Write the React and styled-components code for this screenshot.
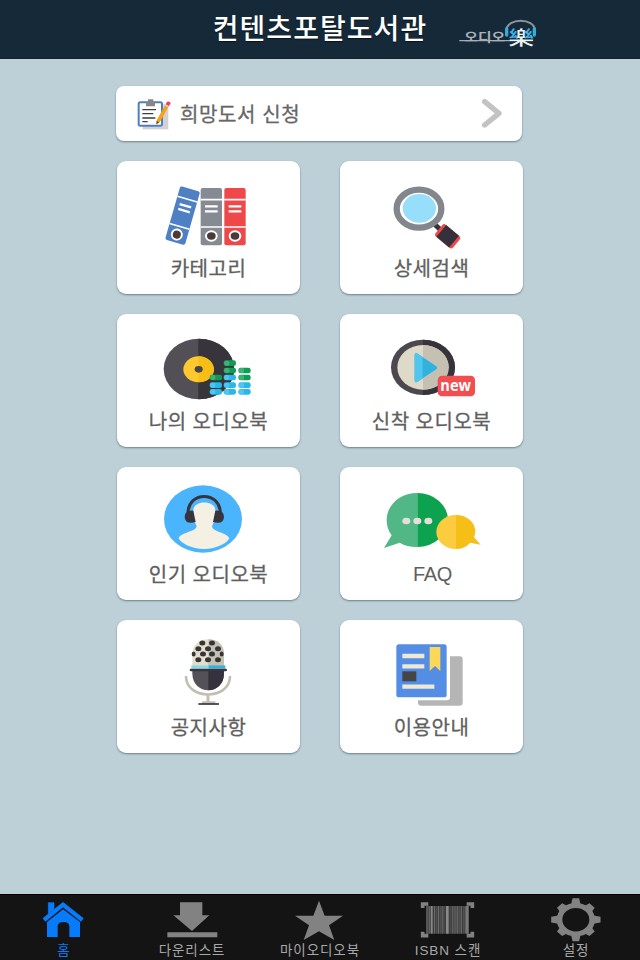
import React, { useState } from "react";
import styled, { createGlobalStyle } from "styled-components";

const menuItems = [
    { id: "category", label: "카테고리", viewBox: "20 17 549 285", Icon: BindersIcon },
    { id: "search", label: "상세검색", viewBox: "16 17 549 285", Icon: SearchIcon },
    { id: "my", label: "나의 오디오북", viewBox: "20 17 549 285", Icon: RecordIcon },
    { id: "new", label: "신착 오디오북", viewBox: "16 17 549 285", Icon: NewIcon },
    { id: "popular", label: "인기 오디오북", viewBox: "20 21 549 285", Icon: ListenerIcon },
    { id: "faq", label: "FAQ", viewBox: "16 21 549 285", Icon: ChatIcon },
    { id: "notice", label: "공지사항", viewBox: "20 17 549 285", Icon: MicIcon },
    { id: "guide", label: "이용안내", viewBox: "16 17 549 285", Icon: GuideIcon },
];

const tabItems = [
    { id: "home", label: "홈", viewBox: "0 27 384 144", Icon: HomeIcon },
    { id: "downloads", label: "다운리스트", viewBox: "384 27 384 144", Icon: DownloadIcon },
    { id: "mybooks", label: "마이오디오북", viewBox: "768 27 384 144", Icon: StarIcon },
    { id: "isbn", label: "ISBN 스캔", viewBox: "192 27 384 144", Icon: BarcodeIcon },
    { id: "settings", label: "설정", viewBox: "576 27 384 144", Icon: GearIcon },
];

function BindersIcon() {
    return (
        <>
            <g transform="translate(210 92) rotate(16)">
                <rect width="62" height="167" rx="6" fill="#4f80c4" />
                <path d="M0 32H62M0 117H62" stroke="#fff" strokeWidth="5" />
                <path d="M13 53H49M13 68H49" stroke="#fff" strokeWidth="7" />
                <circle cx="30" cy="143" r="18" fill="#fff" />
                <circle cx="30" cy="143" r="12" fill="#4b3b36" />
            </g>
            {[[271, "#868a92"], [342, "#ef484b"]].map(([x, color]) => (
                <g key={x} transform={`translate(${x} 98)`}>
                    <rect width="64" height="172" rx="6" fill={color} />
                    <path d="M0 35H64M0 117H64" stroke="#fff" strokeWidth="5" />
                    <path d="M13 55H51M13 70H51" stroke="#fff" strokeWidth="7" />
                    <ellipse cx="32" cy="144" rx="19" ry="17" fill="#fff" />
                    <ellipse cx="32" cy="144" rx="13" ry="11" fill="#4b3b36" />
                </g>
            ))}
        </>
    );
}

function SearchIcon() {
    return (
        <>
            <path d="M299 206L318 224" stroke="#35313a" strokeWidth="15" strokeLinecap="round" />
            <ellipse cx="253" cy="160" rx="67" ry="57" fill="#fff" stroke="#83878d" strokeWidth="19" />
            <ellipse cx="254" cy="159" rx="50" ry="43" fill="#96defa" />
            <g transform="translate(339 243) rotate(40)">
                <rect x="-34" y="-23" width="68" height="46" rx="8" fill="#f0484a" />
                <rect x="-25" y="-23" width="50" height="46" fill="#35313a" />
            </g>
        </>
    );
}

const meters = [
    [300, [[199, "#0f9d56"], [222, "#27b7e8"], [242, "#27b7e8"]]],
    [342, [[156, "#0f9d56"], [178, "#0f9d56"], [199, "#27b7e8"], [222, "#27b7e8"], [242, "#27b7e8"]]],
    [386, [[178, "#0f9d56"], [199, "#0f9d56"], [222, "#27b7e8"], [242, "#27b7e8"]]],
];

function RecordIcon() {
    return (
        <>
            <ellipse cx="266" cy="182" rx="106" ry="91" fill="#534f56" />
            <path d="M264 91A107 91 0 0 1 264 273Z" fill="#38343c" />
            <ellipse cx="265" cy="183" rx="46" ry="39" fill="#fdc92e" />
            <path d="M264 144A46 39 0 0 1 264 222Z" fill="#f7bf16" />
            <ellipse cx="265" cy="183" rx="12" ry="10" fill="#48444b" />
            {meters.map(([x, cells]) =>
                cells.map(([y, color]) => (
                    <g key={`${x}-${y}`}>
                        <rect x={x - 2} y={y} width="37" height="17" rx="7" fill={color} />
                        <rect x={x} y={y + 1} width="15" height="15" rx="5" fill="#fff" opacity=".2" />
                    </g>
                ))
            )}
        </>
    );
}

function NewIcon() {
    return (
        <>
            <ellipse cx="265" cy="177" rx="96" ry="83" fill="#4c484f" />
            <path d="M265 94A96 83 0 0 1 265 260Z" fill="#37333b" />
            <ellipse cx="265" cy="177" rx="77" ry="67" fill="#dfdac8" />
            <path d="M265 110A77 67 0 0 1 265 244Z" fill="#c5c1b2" />
            <path d="M245 140L302 178L245 216Z" fill="#31b1de" stroke="#31b1de" strokeWidth="11" strokeLinejoin="round" />
            <path d="M241 135Q241 132 246 134L264 146V211L246 222Q241 224 241 219Z" fill="#4fc6ee" />
            <rect x="309" y="202" width="112" height="62" rx="13" fill="#f14e50" />
            <text x="317" y="247" fontFamily="'Open Sans', sans-serif" fontWeight="700" fontSize="47" textLength="92" lengthAdjust="spacingAndGlyphs" fill="#fff">new</text>
        </>
    );
}

function ListenerIcon() {
    return (
        <>
            <ellipse cx="278" cy="177" rx="117" ry="101" fill="#4ab5fd" />
            <path d="M249 150C249 120 315 120 315 150C316 172 313 181 305 199C307 217 350 217 357 235C351 249 319 267 281 267C243 267 212 250 205 235C213 215 255 218 259 199C251 181 248 173 249 150Z" fill="#f4f0e4" />
            <path d="M233 158C235 93 328 93 330 158" fill="none" stroke="#38343d" strokeWidth="9" />
            <path d="M249 152L256 186Q223 194 223 170Q224 150 249 152Z" fill="#38343d" />
            <path d="M315 152L308 186Q341 194 341 170Q340 150 315 152Z" fill="#38343d" />
        </>
    );
}

function ChatIcon() {
    return (
        <>
            <path d="M248 99C194 99 156 137 156 180C156 198 161 213 171 226L148 264L195 248Q219 262 248 261Z" fill="#50b785" />
            <path d="M248 99A92 81 0 0 1 248 261Z" fill="#0ca250" />
            {[215, 248, 281].map((x) => (
                <ellipse key={x} cx={x} cy="183" rx="12" ry="10" fill="#e4dfd9" />
            ))}
            <path d="M364 165C330 165 305 188 305 216C305 244 331 267 364 267Z" fill="#fdcb3e" />
            <path d="M364 165C398 165 422 188 422 214Q422 224 418 232L438 254L407 248Q389 267 364 267Z" fill="#f6bf18" />
        </>
    );
}

const micHoles = [
    [276, 86], [305, 86],
    [264, 103], [293, 103], [323, 103],
    [250, 119], [278, 119], [305, 119], [334, 119],
    [264, 136], [293, 136], [323, 136],
];

function MicIcon() {
    return (
        <>
            <path d="M227 188C230 258 356 258 359 188" fill="none" stroke="#c2beb2" strokeWidth="8" strokeLinecap="round" />
            <path d="M293 242V266M275 265H315" stroke="#c2beb2" strokeWidth="9" />
            <path d="M264 269H326" stroke="#39353d" strokeWidth="5" />
            <path d="M246 154V119C246 60 341 60 341 119V154Z" fill="#e2dec9" />
            <path d="M294 75C320 75 341 90 341 119V154H294Z" fill="#c4c1b1" />
            {micHoles.map(([x, y]) => (
                <ellipse key={`${x}-${y}`} cx={x} cy={y} rx={x === 250 || x === 334 ? 6 : 9} ry="7.5" fill="#37333c" />
            ))}
            <path d="M243 153H294V163H243Z" fill="#8ed7e8" />
            <path d="M294 153H345V163H294Z" fill="#39b0dc" />
            <path d="M246 166H341V177C341 245 246 245 246 177Z" fill="#555158" />
            <path d="M294 166H341V177C341 211 318 228 294 228Z" fill="#36323d" />
            <rect x="238" y="163" width="112" height="8" rx="4" fill="#39353d" />
        </>
    );
}

function GuideIcon() {
    return (
        <>
            <path d="M346 126H376Q384 126 384 135V265Q384 274 375 274H260Q250 274 250 265V258H337Q346 258 346 249Z" fill="#b5b5b5" />
            <rect x="185" y="90" width="151" height="159" rx="8" fill="#548ee4" />
            <path d="M203 125H269M203 156H269M203 217H299" stroke="#eee8d5" strokeWidth="13" />
            <rect x="203" y="171" width="42" height="30" fill="#454548" />
            <path d="M285 98H317V170L301 155L285 170Z" fill="#fdd75a" />
        </>
    );
}

function HomeIcon() {
    return (
        <>
            <path d="M132 105L189 59L247 105" fill="none" stroke="currentColor" strokeWidth="13" />
            <path d="M145 53H162V73L145 87Z" fill="currentColor" stroke="currentColor" strokeWidth="2" />
            <path d="M141 111L189 73L240 111V156H208V124Q208 111 190 111Q173 111 173 124V156H141Z" fill="currentColor" />
        </>
    );
}

function DownloadIcon() {
    return <path d="M540 52H607V91H628L576 138L520 91H540ZM502 142H652V157H502Z" fill="currentColor" />;
}

function StarIcon() {
    return <path d="M957 47L974 92H1029L987 121L1003 165L957 139L911 165L927 121L885 92H940Z" fill="currentColor" />;
}

// x, width, shade
const bars = [
    [318, 8, "#555"], [328, 3, "#777"], [333, 5, "#888"], [342, 3, "#6b6b6b"], [347, 5, "#505050"],
    [354, 3, "#6b6b6b"], [359, 6, "#505050"], [367, 3, "#707070"], [372, 4, "#444"], [378, 8, "#8a8a8a"],
    [389, 6, "#484848"], [397, 3, "#707070"], [402, 6, "#555"], [410, 3, "#777"], [415, 5, "#505050"],
    [422, 4, "#666"], [429, 5, "#505050"], [436, 10, "#777"],
];

function BarcodeIcon() {
    return (
        <>
            <rect x="318" y="63" width="128" height="83" fill="#3c3c3c" />
            {bars.map(([x, width, shade]) => (
                <rect key={x} x={x} y="63" width={width} height="83" fill={shade} />
            ))}
            <path d="M308 69V57H325M440 57H457V69M308 140V152H325M440 152H457V140" fill="none" stroke="currentColor" strokeWidth="11" />
        </>
    );
}

function GearIcon() {
    return (
        <g transform="translate(767.5 104) scale(1 .87)">
            <circle r="49" fill="none" stroke="currentColor" strokeWidth="17" />
            {[0, 45, 90, 135, 180, 225, 270, 315].map((angle) => (
                <path
                    key={angle}
                    d={angle % 90 ? "M-15 -53L-11 -69H11L15 -53Z" : "M-14 -53L-10 -74H10L14 -53Z"}
                    transform={`rotate(${angle})`}
                    fill="currentColor"
                />
            ))}
        </g>
    );
}

function BrandLogo() {
    return (
        <Brand viewBox="774 54 240 96">
            <defs>
                <pattern id="tone" patternUnits="userSpaceOnUse" x="922" y="80" width="90" height="70">
                    <rect width="90" height="70" fill="#eef1f3" />
                    <rect width="30" height="37" fill="#3fb4e8" />
                    <rect x="52" width="38" height="37" fill="#3fb4e8" />
                </pattern>
            </defs>
            <path d="M778 122H998" stroke="#a3acb3" strokeWidth="4" />
            <text x="793" y="125" fontSize="37" fontWeight="700" textLength="122" lengthAdjust="spacingAndGlyphs" fill="#a9b2b9">오디오</text>
            <path d="M919 92C920 52 1004 52 1005 92" fill="none" stroke="#8a959d" strokeWidth="6" />
            <path d="M920 86V105M1003 86V105" stroke="#35a9e1" strokeWidth="10" strokeLinecap="round" />
            <text x="925" y="135" fontSize="58" fontWeight="500" textLength="78" lengthAdjust="spacingAndGlyphs" fill="url(#tone)">樂</text>
        </Brand>
    );
}

function ClipboardIcon() {
    return (
        <WishIcon viewBox="32 23 192 165">
            <path d="M112 78H189V153H112Z" fill="#d3d1d2" />
            <rect x="100" y="72" width="70" height="70" rx="5" fill="#fff" stroke="#4c7fc4" strokeWidth="6" />
            <path d="M122 84V71Q124 69 128 69V63H144V69Q149 69 149 73V84Z" fill="#86878b" />
            <path d="M111 94H152M111 106H144M111 119H150M111 130H127" stroke="#403d40" strokeWidth="4" />
            <path d="M180 79L190 84L164 131L153 138L154 126Z" fill="#f6a01c" />
            <path d="M153 138L154 128L162 132Z" fill="#5b4a35" />
            <path d="M180 79L185 70Q195 67 196 76L190 84Z" fill="#ef4363" />
            <path d="M179 79L191 86" stroke="#dcdcdc" strokeWidth="4" />
        </WishIcon>
    );
}

function App() {
    const [activeTab, setActiveTab] = useState("home");

    return (
        <Screen>
            <GlobalStyle />
            <Header>
                <div />
                <Title>컨텐츠포탈도서관</Title>
                <BrandLogo />
            </Header>

            <Content>
                <WishButton>
                    <ClipboardIcon />
                    <WishLabel>희망도서 신청</WishLabel>
                    <Chevron viewBox="1101 23 150 165">
                        <path d="M1139 70L1182 105L1139 140" />
                    </Chevron>
                </WishButton>

                <MenuGrid>
                    {menuItems.map(({ id, label, viewBox, Icon }) => (
                        <MenuCard key={id}>
                            <CardIcon viewBox={viewBox}>
                                <Icon />
                            </CardIcon>
                            <CardLabel $latin={id === "faq"}>{label}</CardLabel>
                        </MenuCard>
                    ))}
                </MenuGrid>
            </Content>

            <TabBar>
                {tabItems.map(({ id, label, viewBox, Icon }) => (
                    <Tab key={id} $active={activeTab === id} onClick={() => setActiveTab(id)}>
                        <TabIcon viewBox={viewBox}>
                            <Icon />
                        </TabIcon>
                        <TabLabel $active={activeTab === id}>{label}</TabLabel>
                    </Tab>
                ))}
            </TabBar>
        </Screen>
    );
}

const GlobalStyle = createGlobalStyle`
    * {
        box-sizing: border-box;
    }

    body {
        margin: 0;
        background-color: #bdd0d8;
        font-family: "Liberation Sans", "Noto Sans CJK KR", sans-serif;
    }

    button {
        border: none;
        padding: 0;
        font-family: inherit;
        cursor: pointer;
    }
`

const Screen = styled.div`
    width: 640px;
    height: 960px;
    display: flex;
    flex-direction: column;
    overflow: hidden;
`

const Header = styled.header`
    height: 59px;
    display: grid;
    grid-template-columns: 1fr auto 1fr;
    background-color: #152938;
    border-bottom: 1px solid #102331;
`

const Title = styled.h1`
    margin: 0;
    padding-top: 2px;
    color: #fff;
    font-size: 28px;
    font-weight: 500;
    line-height: 56px;
    letter-spacing: 1.05px;
    text-shadow: 0 1px 1px #08141d;
`

const Brand = styled.svg`
    width: 80px;
    height: 32px;
    margin: 18px 0 0 31px;
`

const Content = styled.main`
    flex: 1;
    padding: 27px 116px 0;
`

const WishButton = styled.button`
    width: 406px;
    height: 55px;
    display: flex;
    align-items: center;
    background-color: #fff;
    border-radius: 8px;
    box-shadow: 0 1px 2px rgba(50, 75, 85, 0.6);
`

const WishIcon = styled.svg`
    width: 64px;
    height: 55px;
`

const WishLabel = styled.span`
    flex: 1;
    color: #666;
    font-size: 20px;
    letter-spacing: 0.6px;
    text-align: left;
    -webkit-text-stroke: 0.3px #666;
`

const Chevron = styled.svg`
    width: 50px;
    height: 55px;
    fill: none;
    stroke: #c3c3c3;
    stroke-width: 16;
    stroke-linecap: round;
    stroke-linejoin: round;
`

const MenuGrid = styled.div`
    display: grid;
    grid-template-columns: 183px 183px;
    grid-auto-rows: 132.5px;
    gap: 20.5px 40px;
    margin: 20px 0 0 1px;
`

const MenuCard = styled.button`
    display: flex;
    flex-direction: column;
    align-items: center;
    background-color: #fff;
    border-radius: 9px;
    box-shadow: 0 1px 2px rgba(50, 75, 85, 0.6);
`

const CardIcon = styled.svg`
    width: 183px;
    height: 95px;
    flex-shrink: 0;
`

const CardLabel = styled.span`
    padding: ${(props) => (props.$latin ? "0 0 0 2px" : "1px 0 0")};
    color: #5f5f5f;
    font-size: 20px;
    line-height: 24px;
    letter-spacing: ${(props) => (props.$latin ? "-0.4px" : "0.5px")};
    white-space: nowrap;
    -webkit-text-stroke: ${(props) => (props.$latin ? "0" : "0.3px #5f5f5f")};
`

const TabBar = styled.nav`
    height: 66px;
    display: grid;
    grid-template-columns: repeat(5, 1fr);
    background-color: #141414;
    border-top: 1px solid #000;
`

const Tab = styled.button`
    display: flex;
    flex-direction: column;
    align-items: center;
    background-color: transparent;
    color: ${(props) => (props.$active ? "#067bfb" : "#828282")};
`

const TabIcon = styled.svg`
    width: 128px;
    height: 48px;
    margin-top: -1px;
`

const TabLabel = styled.span`
    padding-top: 1px;
    color: ${(props) => (props.$active ? "#067bfb" : "#a8a8a8")};
    font-size: 13.5px;
    line-height: 16px;
    letter-spacing: 0.9px;
    white-space: nowrap;
`

export default App;
